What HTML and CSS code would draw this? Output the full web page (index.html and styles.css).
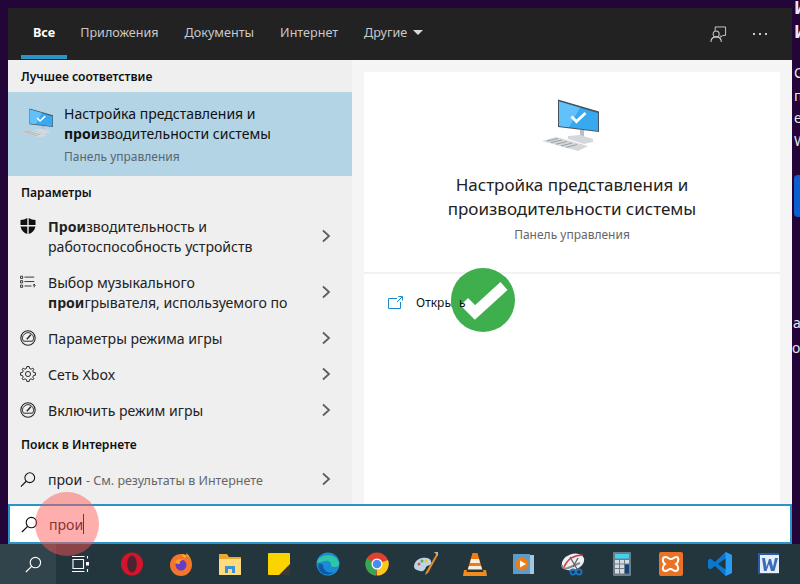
FILE: index.html
```html
<!DOCTYPE html>
<html lang="ru">
<head>
<meta charset="utf-8">
<title>Поиск</title>
<link rel="stylesheet" href="styles.css">
</head>
<body>
<svg class="defs" width="0" height="0">
  <defs>
    <symbol id="chev" viewBox="0 0 10 14"><path d="M2 1.500 8 7l-6 5.500" fill="none" stroke="#5f5f5f" stroke-width="1.800"/></symbol>
    <symbol id="gauge" viewBox="0 0 20 20"><circle cx="10" cy="10" r="9" fill="none" stroke="#222" stroke-width="1.300"/><path d="M4.300 14a6.800 6.800 0 1 1 11.400 0z" fill="none" stroke="#222" stroke-width="1.200"/><path d="M8.500 11.500 13.500 6" stroke="#222" stroke-width="1.700"/></symbol>
    <symbol id="lens" viewBox="0 0 18 18"><circle cx="11" cy="7" r="5.500" fill="none" stroke="currentColor" stroke-width="1.200"/><path d="M7 11 1 17" stroke="currentColor" stroke-width="1.300"/></symbol>
    <symbol id="pc" viewBox="0 0 60 56">
      <path d="M38 33h4v7h-4z" fill="#b9bfc4"/>
      <path d="M26 39l12-1 13 4v3l-9 2-16-5z" fill="#d4d8dc"/>
      <path d="M16 2.500 57 14.500V35L16 30z" fill="#46545e"/>
      <path d="M17 4.500 56 16v18L17 29z" fill="#38a9f0"/>
      <path d="M17 4.500 38 10.700 27 30.300 17 29z" fill="#62c0fa"/>
      <path d="M29.500 19.500l5 5 9-8.500" fill="none" stroke="#fff" stroke-width="2.800"/>
      <path d="M0 44 14 40l32 9-10 5z" fill="#d4d8da"/>
      <path d="M5 44 16 41.500M9 45.500 20 43M14 47.200 25 44.500M19 49l11-3M24 50.500l11-3" stroke="#9aa0a5" stroke-width="1"/>
    </symbol>
  </defs>
</svg>

<div class="backdrop">
  <span class="bg-glyph bg-a">И</span>
  <span class="bg-glyph bg-b">И</span>
  <span class="bg-glyph bg-c">С</span>
  <span class="bg-glyph bg-d">п</span>
  <span class="bg-glyph bg-e">е</span>
  <span class="bg-glyph bg-f">W</span>
  <span class="bg-btn"></span>
  <span class="bg-glyph bg-g">а</span>
  <span class="bg-glyph bg-h">о</span>
</div>

<main class="window">
  <header class="tabs">
    <nav class="tab-list">
      <a class="tab tab-active">Все</a>
      <a class="tab">Приложения</a>
      <a class="tab">Документы</a>
      <a class="tab">Интернет</a>
      <a class="tab">Другие<i class="caret"></i></a>
    </nav>
    <div class="tab-tools">
      <svg class="feedback" viewBox="0 0 18 18" width="17" height="17"><path d="M5.500 5V1h11v9h-3l-2 2v-2" fill="none" stroke="#cfcfcf" stroke-width="1"/><circle cx="6.500" cy="8.500" r="3.200" fill="#222" stroke="#cfcfcf" stroke-width="1.100"/><path d="M1 17c0-3.500 2-5.500 5.500-5.500s5.500 2 5.500 5.500" fill="none" stroke="#cfcfcf" stroke-width="1.100"/></svg>
      <span class="dots"><i></i><i></i><i></i></span>
    </div>
  </header>

  <div class="panes">
    <section class="results">
      <h2 class="group">Лучшее соответствие</h2>
      <div class="best">
        <svg class="best-icon" width="35" height="32"><use href="#pc"/></svg>
        <div class="best-text">
          <div class="line">Настройка представления и</div>
          <div class="line"><b>прои</b>зводительности системы</div>
          <div class="sub">Панель управления</div>
        </div>
      </div>

      <h2 class="group">Параметры</h2>
      <div class="row row-two">
        <svg class="ico ico-shield" viewBox="0 0 16 16" width="16" height="16"><path d="M8.700 0c2 1.300 4.300 2 6.800 2v5H8.700zM7.300 0v7H.5V2C3 2 5.300 1.300 7.300 0zM.6 8.500h6.700V16C3.800 14.800 1.200 12.500.6 8.500zM8.700 8.500h6.700c-.6 4-3.200 6.300-6.700 7.500z" fill="#111"/></svg>
        <div class="row-text"><div><b>Прои</b>зводительность и</div><div>работоспособность устройств</div></div>
        <svg class="chev" width="10" height="14"><use href="#chev"/></svg>
      </div>
      <div class="row row-two">
        <svg class="ico ico-list" viewBox="0 0 18 14" width="18" height="14"><path d="M.5.500h2.500V3H.5zM.5 5.500h2.500V8H.5zM.5 10.500h2.500V13H.5z" fill="none" stroke="#222" stroke-width="1"/><path d="M5 1.500h11M5 6.500h11M5 11.500h8M16 13V9.500M14.500 11 16 9.500l1.500 1.500" fill="none" stroke="#222" stroke-width="1"/></svg>
        <div class="row-text"><div>Выбор музыкального</div><div><b>прои</b>грывателя, используемого по</div></div>
        <svg class="chev" width="10" height="14"><use href="#chev"/></svg>
      </div>
      <div class="row">
        <svg class="ico" width="16" height="16"><use href="#gauge"/></svg>
        <div class="row-text">Параметры режима игры</div>
        <svg class="chev" width="10" height="14"><use href="#chev"/></svg>
      </div>
      <div class="row">
        <svg class="ico" viewBox="0 0 20 20" width="16" height="16"><circle cx="10" cy="10" r="3.200" fill="none" stroke="#222" stroke-width="1.200"/><path d="M8.500 .7h3l.5 2.500 1.800.8L16 2.700 17.300 4l-1.300 2.200.8 1.800 2.500.5v3l-2.500.5-.8 1.800 1.300 2.200-1.300 1.300-2.200-1.300-1.800.8-.5 2.500h-3l-.5-2.500-1.800-.8L4 17.300 2.700 16 4 13.800l-.8-1.800-2.500-.5v-3L3.200 8 4 6.200 2.700 4 4 2.700 6.200 4 8 3.200z" fill="none" stroke="#222" stroke-width="1.200"/></svg>
        <div class="row-text">Сеть Xbox</div>
        <svg class="chev" width="10" height="14"><use href="#chev"/></svg>
      </div>
      <div class="row">
        <svg class="ico" width="16" height="16"><use href="#gauge"/></svg>
        <div class="row-text">Включить режим игры</div>
        <svg class="chev" width="10" height="14"><use href="#chev"/></svg>
      </div>

      <h2 class="group group-web">Поиск в Интернете</h2>
      <div class="row">
        <svg class="ico ico-lens" width="17" height="17"><use href="#lens"/></svg>
        <div class="row-text">прои <span class="hint">- См. результаты в Интернете</span></div>
        <svg class="chev" width="10" height="14"><use href="#chev"/></svg>
      </div>
    </section>

    <section class="preview">
      <div class="card">
        <div class="card-head">
          <svg class="card-icon" width="60" height="56"><use href="#pc"/></svg>
          <div class="card-title">Настройка представления и<br>производительности системы</div>
          <div class="card-sub">Панель управления</div>
        </div>
        <div class="card-action">
          <svg class="open-icon" viewBox="0 0 15 13" width="15" height="13"><path d="M9 2.500H.5v10h12V6" fill="none" stroke="#1a8ad0" stroke-width="1"/><path d="M9 6 14 1M10.500.500H14.500V4.500" fill="none" stroke="#1a8ad0" stroke-width="1"/></svg>
          <span>Откры<span>т</span><span class="peek">ь</span></span>
        </div>
      </div>
    </section>
  </div>

  <div class="searchbox">
    <svg class="ico-lens" width="17" height="17"><use href="#lens"/></svg>
    <span class="query">прои</span><i class="cursor"></i>
  </div>
</main>

<footer class="taskbar">
  <div class="tb-item tb-search"><svg width="17" height="17"><use href="#lens"/></svg></div>
  <div class="tb-item tb-view"><svg viewBox="0 0 17 16" width="17" height="16"><path d="M1 3.500h10.500v9H1zM0 .500h12.500M0 15.500h12.500M15.500 0v2.500M15.500 13v3" fill="none" stroke="#fff" stroke-width="1.100"/><path d="M14 6h3v3.500h-3z" fill="#fff"/></svg></div>
  <div class="tb-item"><svg viewBox="0 0 24 24" width="24" height="24"><ellipse cx="12" cy="12" rx="11" ry="11.500" fill="#d3142a"/><ellipse cx="12" cy="12" rx="4.800" ry="8.600" fill="#4a2530"/></svg></div>
  <div class="tb-item"><svg viewBox="0 0 24 24" width="24" height="24"><circle cx="12" cy="13" r="11" fill="#f5752a"/><path d="M12 2c6 0 11 5 11 11 0-4-1.500-8-5.500-12 0 3-1 4-2 5-1-1.500-2-3-3.500-4z" fill="#fbb32d"/><circle cx="12" cy="13" r="5.500" fill="#6a3bc8"/><path d="M6 10c2-3 6-4 9-2-3 0-5 2-4 4-2 0-4 0-5-2z" fill="#f5a12d"/></svg></div>
  <div class="tb-item"><svg viewBox="0 0 24 24" width="24" height="24"><path d="M1 2h8l2 3h12v18H1z" fill="#eaa92f"/><path d="M1 7h22v16H1z" fill="#fcdc7e"/><path d="M7 14h10v7H7z" fill="#3f8fd8"/><path d="M10 17h4v4h-4z" fill="#fcdc7e"/></svg></div>
  <div class="tb-item"><svg viewBox="0 0 24 24" width="24" height="24"><rect x="1" y="1" width="22" height="22" rx="1" fill="#fbd400"/><path d="M12 23 23 12v11z" fill="#3a3a32"/></svg></div>
  <div class="tb-item"><svg viewBox="0 0 24 24" width="24" height="24"><circle cx="12" cy="12" r="11.500" fill="#1b8cd4"/><path d="M1 10C3 2 20 0 23 11c.5 4-5 5-8 3 1-3-2-6-6-5-4 .8-6 3-8 1z" fill="#2fc6a5"/><path d="M7 13c0 6 6 9 11 7-3 3-10 4-14-1-2-3-2-6-1-8 1 .5 3 1 4 2z" fill="#0f5aa8"/></svg></div>
  <div class="tb-item"><svg viewBox="0 0 24 24" width="24" height="24"><circle cx="12" cy="12" r="11.500" fill="#e0402f"/><path d="M12 12 23 8a11.500 11.500 0 0 1-11 15.500z" fill="#f8c81c"/><path d="M12 12l-1 11.500A11.500 11.500 0 0 1 1.800 6.500z" fill="#35a84f"/><circle cx="12" cy="12" r="5.500" fill="#fff"/><circle cx="12" cy="12" r="4.300" fill="#4a8bf0"/></svg></div>
  <div class="tb-item"><svg viewBox="0 0 24 24" width="24" height="24"><path d="M0 14C1 7 8 5 13 6c3 .6 5 3 4 6-1 2-4 1-5 3-1 3-3 5-6 4-4-1-6-2-6-5z" fill="#bcd4e6"/><circle cx="5" cy="12" r="1.500" fill="#e05050"/><circle cx="8" cy="9" r="1.500" fill="#50b050"/><circle cx="12" cy="9" r="1.500" fill="#f0c030"/><path d="M23 1 12 20l-1 3 3-2L24 3z" fill="#e0902c"/><path d="M20 0h4v4z" fill="#c8b090"/></svg></div>
  <div class="tb-item"><svg viewBox="0 0 24 24" width="24" height="24"><path d="M9.500 1h5l5 17h-15z" fill="#f47a10"/><path d="M8 7h8l1 4H7zM6 14h12l1 3H5z" fill="#f4f0e8"/><path d="M1 18h3l-.5 2h17l-.5-2h3l1 6H0z" fill="#f08c1c"/></svg></div>
  <div class="tb-item"><svg viewBox="0 0 22 22" width="22" height="22"><rect x="1" y="2" width="20" height="19" fill="#a5c7de"/><rect x="0" y="1" width="17" height="20" fill="#5d9cc8"/><circle cx="9" cy="11" r="6.500" fill="#ee7d18"/><path d="M7 7.500v7l6-3.500z" fill="#fff"/></svg></div>
  <div class="tb-item"><svg viewBox="0 0 24 24" width="24" height="24"><ellipse cx="12" cy="10" rx="11.500" ry="8" transform="rotate(-20 12 10)" fill="#eef0f2"/><path d="M3 15C7 6 15 3 22 3" fill="none" stroke="#d83848" stroke-width="1.500"/><path d="M1 13c0 3 2 4 6 3l12-5" fill="none" stroke="#8a8a8a" stroke-width="2"/><path d="M9 5l7 12M17 6l-5 9" stroke="#666" stroke-width="1.400"/><circle cx="18" cy="20" r="2.600" fill="none" stroke="#1d76c8" stroke-width="1.600"/><circle cx="12" cy="20" r="2.600" fill="none" stroke="#1d76c8" stroke-width="1.600"/></svg></div>
  <div class="tb-item"><svg viewBox="0 0 18 24" width="18" height="24"><rect width="18" height="24" rx="1" fill="#6f7d88"/><rect x="2" y="2" width="14" height="4.500" fill="#3fd2f2"/><path d="M2 8h4v3.500H2zM7 8h4v3.500H7zM12 8h4v3.500h-4zM2 12.500h4V16H2zM7 12.500h4V16H7zM2 17h4v4.500H2zM7 17h4v4.500H7z" fill="#d5dbe0"/><rect x="12" y="12.500" width="4" height="9" fill="#10467e"/></svg></div>
  <div class="tb-item"><svg viewBox="0 0 24 24" width="24" height="24"><rect width="24" height="24" rx="2" fill="#ea7224"/><path d="M6.500 5c2.500 0 3 2 5.500 2s3-2 5.500-2 2.500 5-.5 7c3 2 3 7-.5 7-2.500 0-2.500-2-5-2s-2.500 2-5 2c-3.500 0-3.500-5-.5-7-3-2-3-7 .5-7z" fill="none" stroke="#fff" stroke-width="2"/></svg></div>
  <div class="tb-item"><svg viewBox="0 0 24 24" width="24" height="24"><path d="M17.500 0 24 3v18l-6.500 3L7 14l-4.500 3.500L0 16v-8l2.500-1.500L7 10z" fill="#0a78cf"/><path d="M17.500 0 24 3v18l-6.500 3z" fill="#2a9df0"/><path d="M17.500 6.500 10 12l7.500 5.500z" fill="#23353d"/></svg></div>
  <div class="tb-item"><svg viewBox="0 0 22 22" width="22" height="22"><rect width="21" height="21" fill="#2a5aa8"/><rect x="2" y="2" width="19" height="18" fill="#e8eef6"/><path d="M4 5h3l1.500 9 2.500-8h2l2 8 2-9h3l-3.500 13H13l-2-7-2.500 7H6z" fill="#3a6cb8"/></svg></div>
</footer>

<div class="touch"></div>
<div class="done"><svg viewBox="0 0 64 64" width="64" height="64"><path d="M13.300 33.700 24 44.500 53 18" fill="none" stroke="#fff" stroke-width="10.500"/></svg></div>
</body>
</html>
```

FILE: styles.css
```css
* { box-sizing: border-box; }
html, body { margin: 0; height: 100%; }
body {
  width: 800px;
  height: 584px;
  background: #23053a;
  font-family: "Noto Sans", "Open Sans", sans-serif;
  font-size: 14px;
  color: #111;
  display: flex;
  flex-direction: column;
  position: relative;
  overflow: hidden;
}
.defs { position: absolute; }
b { font-weight: 700; }

.backdrop { position: absolute; inset: 0; }
.bg-glyph { position: absolute; left: 794px; color: #e8e8f0; font-size: 14px; line-height: 16px; }
.bg-a { top: 0; font-weight: 700; font-size: 17px; }
.bg-b { top: 24px; font-weight: 700; font-size: 17px; }
.bg-c { top: 65px; }
.bg-d { top: 88px; }
.bg-e { top: 110px; }
.bg-f { top: 133px; }
.bg-g { top: 315px; left: 793px; }
.bg-h { top: 340px; left: 792px; }
.bg-btn { position: absolute; left: 794px; top: 175px; width: 12px; height: 42px; border-radius: 4px; background: #0a5fd0; }

.window {
  position: relative;
  margin: 8px 8px 0;
  flex: 1;
  min-height: 0;
  display: flex;
  flex-direction: column;
}

.tabs {
  height: 52px;
  background: #222;
  display: flex;
  justify-content: space-between;
  flex: none;
}
.tab-list { display: flex; padding-left: 13px; }
.tab {
  color: #c9c9c9;
  font-size: 12.600px;
  height: 52px;
  line-height: 50px;
  padding: 0 13px;
  display: block;
}
.tab-active {
  color: #fff;
  font-weight: 700;
  padding: 0 12px;
  border-bottom: 4px solid #2a94c8;
  height: 51px;
}
.caret {
  display: inline-block;
  margin-left: 6px;
  width: 0;
  height: 0;
  border: 5px solid transparent;
  border-top: 5px solid #d8d8d8;
  border-bottom: 0;
  vertical-align: 2px;
}
.tab-tools { display: flex; align-items: center; gap: 26px; padding-right: 25px; }
.dots { display: flex; gap: 4px; }
.dots i { width: 2px; height: 2px; background: #cfcfcf; display: block; }

.panes { flex: 1; display: flex; min-height: 0; }
.results { width: 344px; background: #efefef; flex: none; }
.preview { flex: 1; background: #f5f5f5; padding: 12px 12px 0; }

.group {
  margin: 0;
  font-size: 12.100px;
  font-weight: 600;
  color: #111;
  height: 32px;
  line-height: 33px;
  padding-left: 13px;
}
.group-web { height: 33px; }

.best {
  height: 84px;
  background: #b3d4e5;
  display: flex;
  padding: 12px 0 0 12px;
}
.best-icon { margin-top: 3px; flex: none; }
.best-text { margin-left: 9px; }
.line { font-size: 14px; line-height: 20px; }
.sub { font-size: 12px; line-height: 22px; color: #58666e; margin-top: 2px; }

.row {
  height: 36px;
  display: flex;
  align-items: center;
  padding: 0 21px 0 12px;
  font-size: 14.100px;
  color: #222;
}
.row-two { height: 56px; line-height: 20px; }
.row-two .row-text { padding-top: 2px; }
.ico { flex: none; width: 16px; margin-right: 12px; }
.ico-shield { align-self: flex-start; margin-top: 10px; }
.ico-list { align-self: flex-start; margin-top: 11px; }
.row-text { flex: 1; white-space: nowrap; }
.chev { flex: none; }
.hint { color: #666; font-size: 12.500px; }
.ico-lens { color: #111; }

.card { background: #fff; height: 432px; }
.card-head {
  height: 202px;
  border-bottom: 2px solid #f2f2f2;
  display: flex;
  flex-direction: column;
  align-items: center;
  padding-top: 25px;
}
.card-title { font-size: 17px; line-height: 24px; text-align: center; color: #222; margin-top: 20px; }
.card-sub { font-size: 12px; color: #666; margin-top: 5px; }
.card-action {
  display: flex;
  align-items: center;
  padding: 20px 0 0 24px;
  font-size: 12px;
  color: #111;
  gap: 13px;
}
.peek { position: relative; z-index: 1; }

.searchbox {
  flex: none;
  height: 40px;
  background: #fff;
  border: 2px solid #2a94c8;
  display: flex;
  align-items: center;
  padding-left: 11px;
  font-size: 14.100px;
  color: #111;
}
.query { margin-left: 11px; }
.cursor { width: 1px; height: 20px; background: #111; display: block; }

.taskbar {
  flex: none;
  height: 40px;
  background: #23353d;
  display: flex;
}
.tb-item { width: 49px; display: flex; align-items: center; justify-content: center; flex: none; }
.tb-search { width: 56px; background: #31434b; color: #fff; padding-left: 10px; }
.tb-view { margin-right: 2px; }

.touch {
  position: absolute;
  left: 35px;
  top: 492px;
  width: 64px;
  height: 64px;
  border-radius: 50%;
  background: rgba(255, 85, 85, .48);
}
.done {
  position: absolute;
  left: 451px;
  top: 268px;
  width: 64px;
  height: 64px;
  border-radius: 50%;
  background: #3fae4d;
}
```
